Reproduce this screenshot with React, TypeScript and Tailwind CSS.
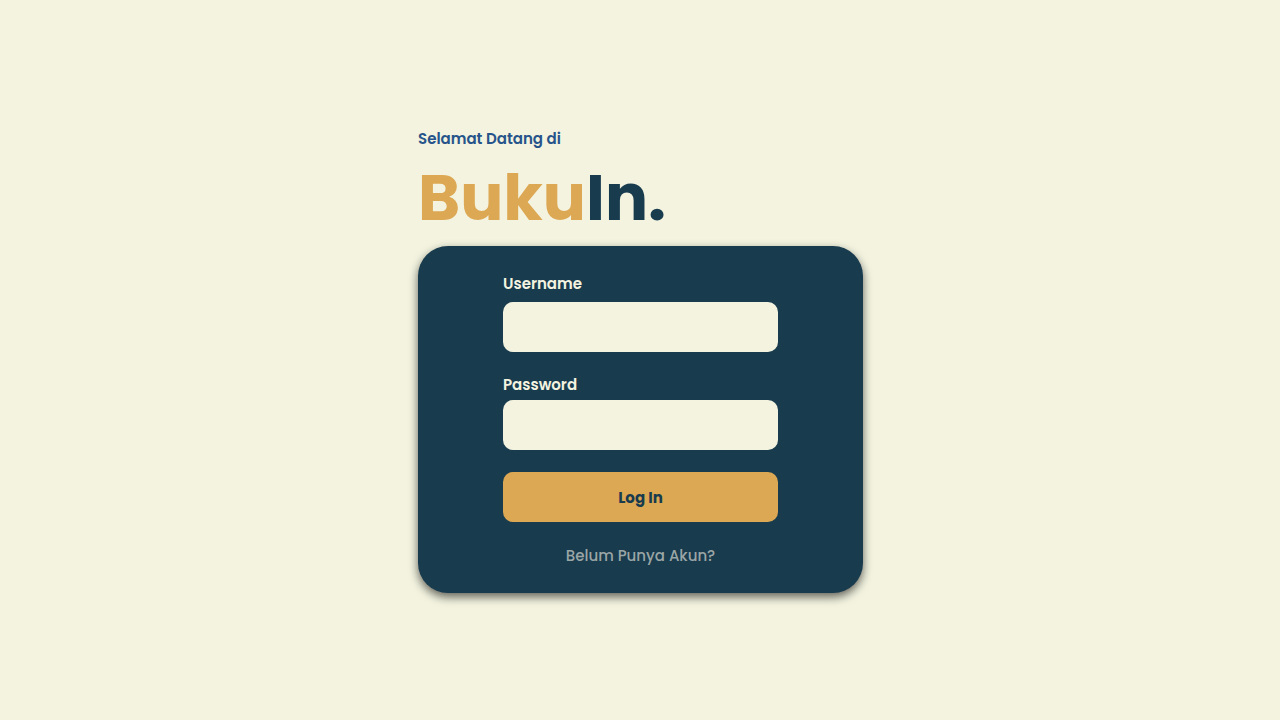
export default function App() {
  return (
    <main className="flex min-h-screen items-center justify-center bg-[#f3f3e0] pb-px pl-px font-['Poppins','Inter',sans-serif]">
      <div className="w-full max-w-[445px]">
        <h1 className="flex flex-col pb-0.5 text-[#183b4e]">
          <span className="text-[15px] leading-[26px] font-semibold text-[#27548a]">Selamat Datang di</span>
          <span className="text-[64px] leading-23 font-bold">
            <span className="text-[#dda853]">Buku</span>In.
          </span>
        </h1>
        <form className="flex flex-col items-center rounded-[30px] bg-[#183b4e] px-[85px] pt-[26px] pb-[25px] shadow-[0_4px_10px_rgba(0,0,0,0.6)]">
          <label htmlFor="username" className="w-full text-[15px] leading-6 font-semibold text-[#f3f3e0]">Username</label>
          <input id="username" type="text" className="mt-[6px] h-[50px] w-full rounded-[10px] bg-[#f3f3e0] px-4 text-[#183b4e]" />
          <label htmlFor="password" className="mt-[21px] w-full text-[15px] leading-6 font-semibold text-[#f3f3e0]">Password</label>
          <input id="password" type="password" className="mt-[3px] h-[50px] w-full rounded-[10px] bg-[#f3f3e0] px-4 text-[#183b4e]" />
          <button type="button" className="mt-[22px] h-[50px] w-full rounded-[10px] bg-[#dda853] pt-0.5 text-[15px] leading-6 font-bold text-[#183b4e]">Log In</button>
          <a href="#register" className="mt-[22px] text-[15px] leading-6 font-medium text-[#9ba6a6]">Belum Punya Akun?</a>
        </form>
      </div>
    </main>
  );
}
